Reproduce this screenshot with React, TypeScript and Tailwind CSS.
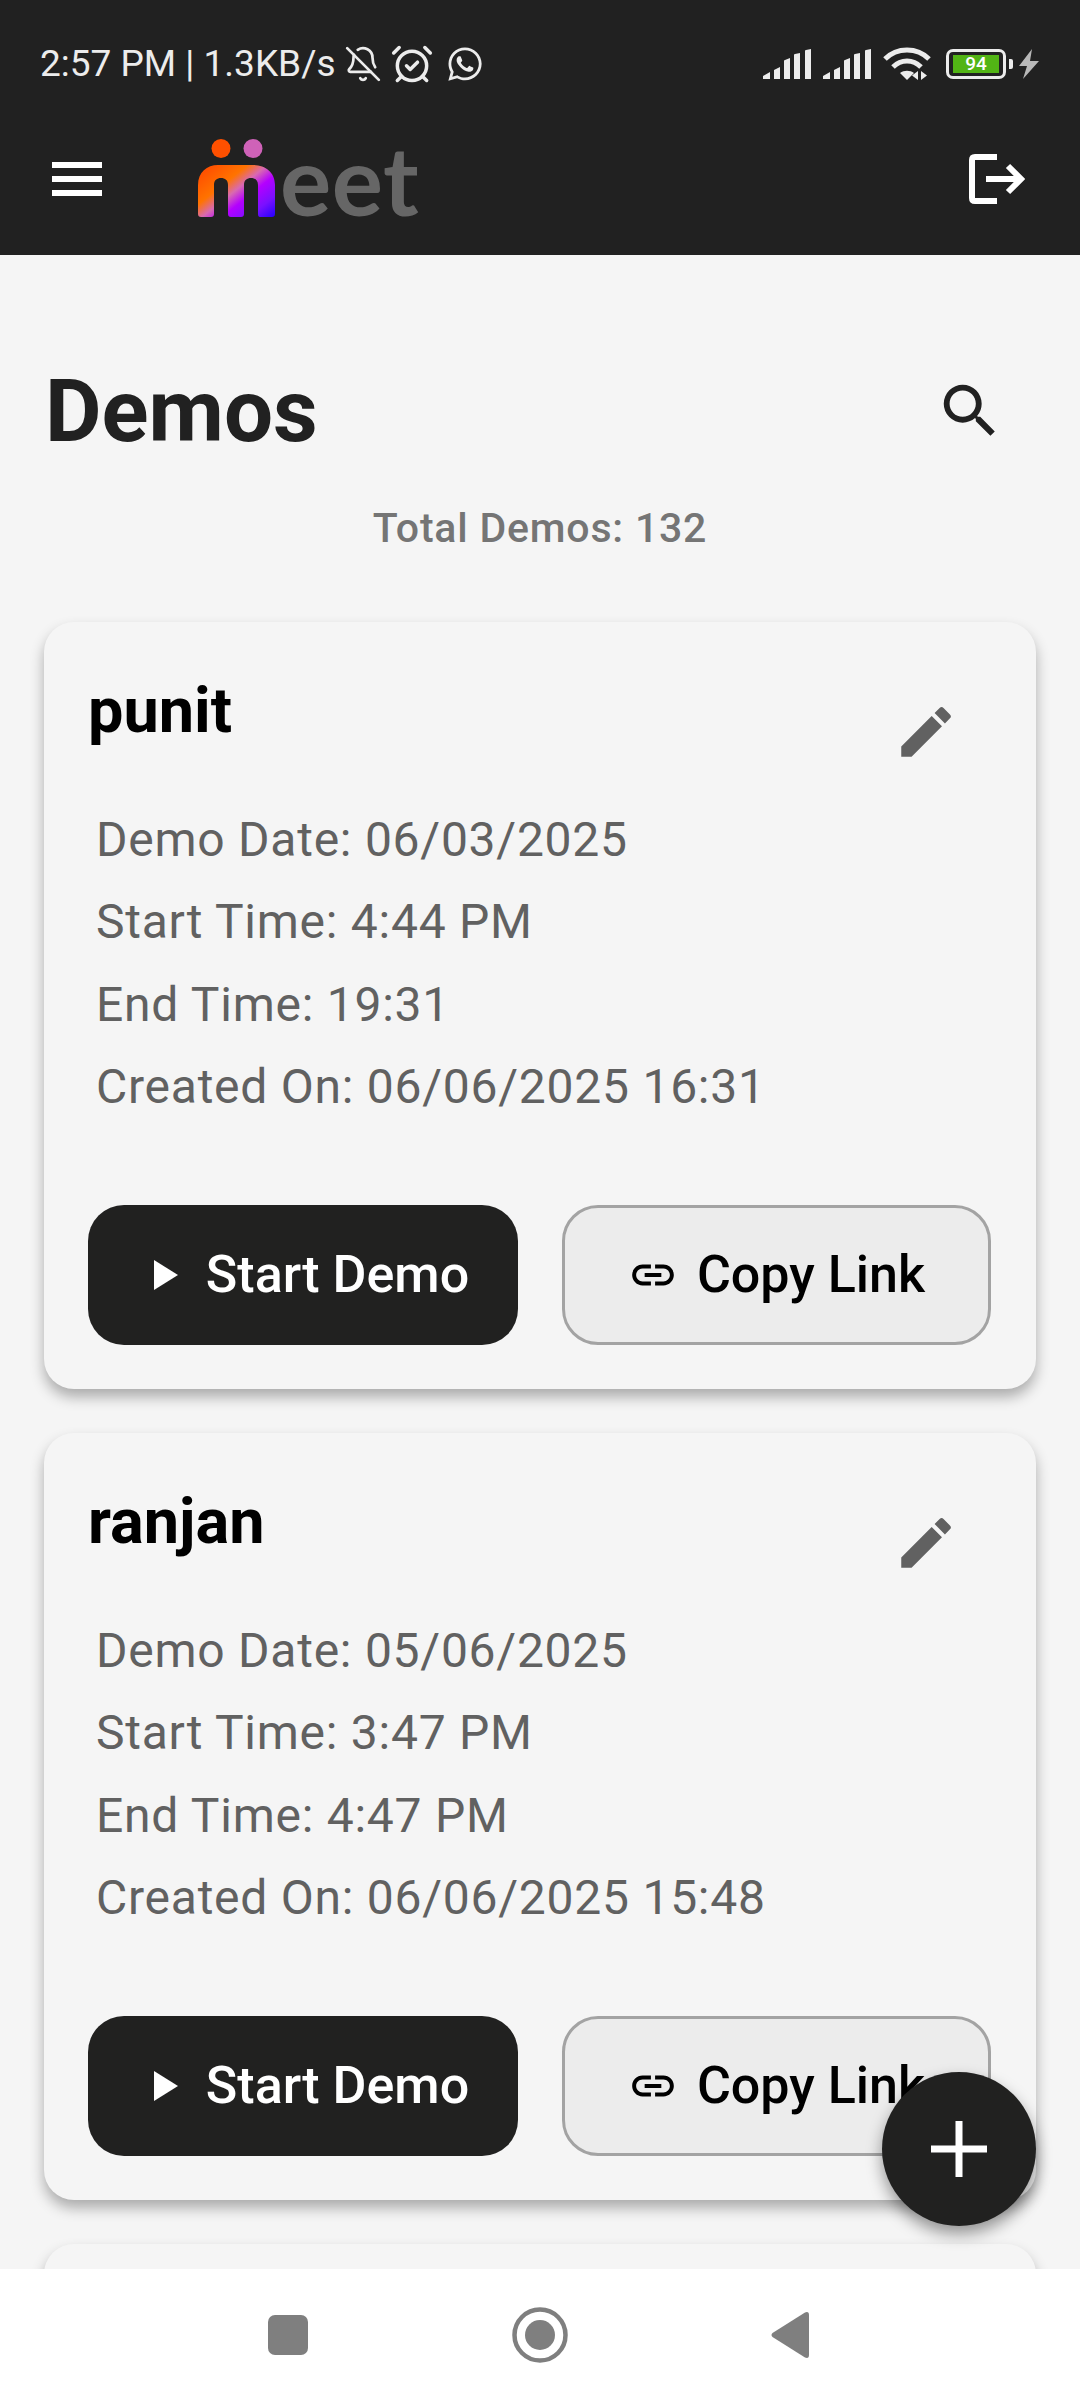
import { AlarmClockCheck, BellOff } from "lucide-react";
import { FaWhatsapp } from "react-icons/fa";

const font = { fontFamily: "Roboto, sans-serif" };

function Bars() {
  return (
    <svg width="48" height="30" viewBox="0 0 48 30" fill="#ececec">
      <path d="M0 30v-3l7-4v7z" />
      <path d="M11 30v-9l6-3v12z" />
      <path d="M21 30V12q0-1 1-1l5-2v21z" />
      <path d="M31 30V6q0-1 1-1l5-1v26z" />
      <path d="M41 30V2q0-1 1-1l5-1v30z" transform="translate(1 0)" />
    </svg>
  );
}

function Card({ name, rows }: { name: string; rows: string[] }) {
  return (
    <div className="mx-[44px] h-[767px] shrink-0 rounded-[30px] bg-[#f5f5f5] px-[44px] pt-[50px] shadow-[0_8px_14px_rgba(0,0,0,0.3)]">
      <div className="flex h-[84px] items-start justify-between">
        <div className="-mt-[3px] text-[63px] leading-[84px] font-bold text-black">{name}</div>
        <svg width="66" height="66" viewBox="0 0 24 24" fill="#616161" className="mt-[27px] mr-[33px]">
          <path d="M3 17.25V21h3.75L17.81 9.94l-3.75-3.75L3 17.25zM20.71 7.04a1 1 0 0 0 0-1.41l-2.34-2.34a1 1 0 0 0-1.41 0l-1.83 1.83 3.75 3.75 1.83-1.83z" />
        </svg>
      </div>
      <div className="mt-[43px] flex flex-col pl-[8px]">
        {rows.map((r) => (
          <div key={r} className="h-[82.3px] text-[48px] leading-[82px] tracking-[0.75px] text-[#616161]">
            {r}
          </div>
        ))}
      </div>
      <div className="mt-[77px] flex gap-[44px]">
        <div className="flex h-[140px] w-[430px] items-center justify-center gap-[22px] rounded-[36px] bg-[#212120] pl-[9px] text-white">
          <svg width="38" height="40" viewBox="0 0 38 40" fill="#fff">
            <path d="M8 5l24 15L8 35z" />
          </svg>
          <span className="text-[52px] font-medium">Start Demo</span>
        </div>
        <div className="flex h-[140px] w-[429px] items-center justify-center gap-[19px] rounded-[36px] border-[3px] border-[#a3a3a3] bg-[#ececec] text-black">
          <svg width="50" height="50" viewBox="0 0 24 24" fill="#000">
            <path d="M3.9 12c0-1.71 1.39-3.1 3.1-3.1h4V7H7c-2.76 0-5 2.24-5 5s2.24 5 5 5h4v-1.9H7c-1.71 0-3.1-1.39-3.1-3.1zM8 13h8v-2H8v2zm9-6h-4v1.9h4c1.71 0 3.1 1.39 3.1 3.1s-1.39 3.1-3.1 3.1h-4V17h4c2.76 0 5-2.24 5-5s-2.24-5-5-5z" />
          </svg>
          <span className="text-[52px] font-medium">Copy Link</span>
        </div>
      </div>
    </div>
  );
}

export default function App() {
  return (
    <div className="flex h-[2400px] w-[1080px] flex-col overflow-hidden bg-[#f5f5f5]" style={font}>
      <header className="h-[255px] shrink-0 bg-[#212121]">
        <div className="flex h-[126px] items-center justify-between pt-[1px] pr-[41px] pl-[40px]">
          <div className="flex items-center text-[#ececec]">
            <span className="text-[37px] whitespace-nowrap">2:57 PM | 1.3KB/s</span>
            <BellOff className="ml-[8px]" size={38} strokeWidth={1.7} />
            <AlarmClockCheck className="ml-[8px]" size={44} strokeWidth={1.9} />
            <FaWhatsapp className="ml-[12px]" size={38} />
          </div>
          <div className="flex items-center gap-[12px]">
            <Bars />
            <Bars />
            <svg width="48" height="36" viewBox="0 0 48 36" fill="none" stroke="#ececec" strokeWidth="5">
              <path d="M2 13c12-12 32-12 44 0" />
              <path d="M10 21c8-8 20-8 28 0" />
              <path d="M24 34l-7-7c4-3 10-3 14 0z" fill="#ececec" stroke="none" />
              <path d="M35 25v9l-6-4.500z" fill="#ececec" stroke="none" />
              <path d="M38 25l6 4.500-6 4.500z" fill="#ececec" stroke="none" />
            </svg>
            <div className="ml-[3px] flex items-center gap-[3px]">
              <div className="flex h-[30px] w-[60px] items-center justify-center rounded-[7px] border-[3px] border-[#ececec]">
                <div className="flex h-[18px] w-[46px] items-center justify-center bg-[#52b415] text-[19px] leading-none font-medium text-white">94</div>
              </div>
              <div className="h-[10px] w-[4px] rounded-r-[2px] bg-[#ececec]" />
            </div>
            <svg className="-ml-[6px]" width="20" height="30" viewBox="0 0 20 30" fill="#b8b8b8">
              <path d="M13 0L0 17h8L4 30 20 12h-9z" />
            </svg>
          </div>
        </div>
        <div className="flex h-[129px] items-start justify-between pr-[55px] pl-[52px]">
          <div className="flex items-start">
            <svg width="50" height="34" viewBox="0 0 50 34" fill="#fff" className="mt-[36px]">
              <rect width="50" height="6" />
              <rect y="14" width="50" height="6" />
              <rect y="28" width="50" height="6" />
            </svg>
            <div className="ml-[96px] flex items-start">
              <svg width="77" height="78" viewBox="0 0 77 78" className="mt-[13px]">
                <defs>
                  <linearGradient id="mg" x1="0" y1="0.15" x2="1" y2="1">
                    <stop offset="0" stopColor="#ff4d00" />
                    <stop offset="0.3" stopColor="#ff7300" />
                    <stop offset="0.45" stopColor="#d96ab0" />
                    <stop offset="0.6" stopColor="#b400ff" />
                    <stop offset="0.8" stopColor="#7a10ff" />
                    <stop offset="1" stopColor="#2200ff" />
                  </linearGradient>
                </defs>
                <circle cx="23" cy="9.500" r="9.500" fill="#ff5000" />
                <circle cx="55" cy="9.500" r="9.500" fill="#cf62b8" />
                <path
                  d="M0 46C0 33 9 26 20 26H55C67 26 77 33 77 46V75Q77 78 74 78H62Q60 78 60 75V46C60 41 57 39 53 39C49 39 46 41 46 46V75Q46 78 43 78H33Q30 78 30 75V46C30 41 27 39 23 39C19 39 16 41 16 46V75Q16 78 13 78H3Q0 78 0 75Z"
                  fill="url(#mg)"
                />
              </svg>
              <span
                className="mt-[5px] ml-[5px] text-[96px] leading-[96px] font-bold tracking-[0.5px] text-[#666666]"
                style={{ fontFamily: "Lato, sans-serif" }}
              >
                eet
              </span>
            </div>
          </div>
          <svg width="56" height="50" viewBox="0 0 56 50" fill="none" stroke="#fff" strokeWidth="6" className="mt-[28px]">
            <path d="M28 3H6Q3 3 3 6V44Q3 47 6 47H28" />
            <path d="M17 25H52" />
            <path d="M39 12l13 13-13 13" />
          </svg>
        </div>
      </header>

      <main className="relative min-h-0 flex-1 overflow-hidden">
        <div className="flex items-start justify-between pt-[106px] pr-[75px] pl-[45px]">
          <h1 className="text-[87px] leading-[100px] font-bold text-[#212121]">Demos</h1>
          <svg className="mt-[15px]" width="70" height="70" viewBox="0 0 24 24" fill="#212121">
            <path d="M15.5 14h-.79l-.28-.27A6.471 6.471 0 0 0 16 9.500 6.500 6.500 0 1 0 9.500 16c1.610 0 3.090-.59 4.230-1.570l.27.28v.79l5 4.990L20.490 19l-4.990-5zm-6 0C7.010 14 5 11.990 5 9.500S7.010 5 9.500 5 14 7.010 14 9.500 11.990 14 9.500 14z" />
          </svg>
        </div>
        <div className="mt-[42px] text-center text-[41px] leading-[50px] font-medium tracking-[0.8px] text-[#757575]">Total Demos: 132</div>
        <div className="mt-[69px] flex flex-col gap-[44px]">
          <Card name="punit" rows={["Demo Date: 06/03/2025", "Start Time: 4:44 PM", "End Time: 19:31", "Created On: 06/06/2025 16:31"]} />
          <Card name="ranjan" rows={["Demo Date: 05/06/2025", "Start Time: 3:47 PM", "End Time: 4:47 PM", "Created On: 06/06/2025 15:48"]} />
          <div className="mx-[44px] h-[767px] shrink-0 rounded-[30px] bg-[#f5f5f5] shadow-[0_8px_14px_rgba(0,0,0,0.3)]" />
        </div>
        <div className="absolute top-[1817px] right-[44px] flex h-[154px] w-[154px] items-center justify-center rounded-full bg-[#212120] shadow-[0_8px_16px_rgba(0,0,0,0.4)]">
          <svg width="56" height="56" viewBox="0 0 56 56" fill="#fff">
            <path d="M24.500 0h7v24.500H56v7H31.500V56h-7V31.500H0v-7h24.500z" />
          </svg>
        </div>
      </main>

      <nav className="flex h-[131px] shrink-0 items-center justify-center bg-white pr-[3px]">
        <div className="flex w-[541px] items-center justify-between">
          <div className="h-[40px] w-[40px] rounded-[7px] bg-[#7f7f7f]" />
          <svg width="56" height="56" viewBox="0 0 56 56">
            <circle cx="28" cy="28" r="25.500" fill="none" stroke="#7f7f7f" strokeWidth="4.500" />
            <circle cx="28" cy="28" r="15" fill="#7f7f7f" />
          </svg>
          <svg width="38" height="46" viewBox="0 0 38 46" fill="#7f7f7f">
            <path d="M34 .5Q38-1 38 3V43q0 4-4 2.500L1.500 25Q-.5 23 1.500 21z" />
          </svg>
        </div>
      </nav>
    </div>
  );
}
